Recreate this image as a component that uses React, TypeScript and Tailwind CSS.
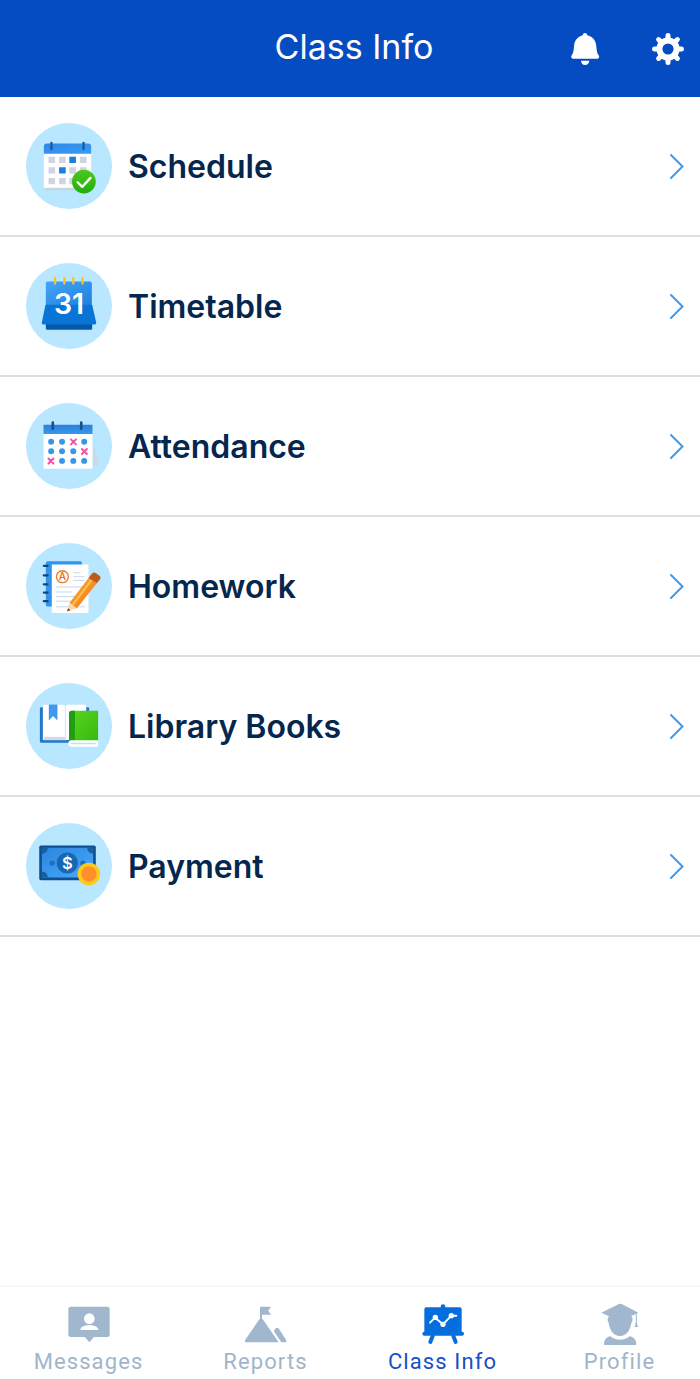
import React from "react";

const ScheduleIcon = () => (
    <svg className="w-[86px] h-[86px] shrink-0" viewBox="32 39 260 260" aria-hidden="true">
        <defs>
            <linearGradient id="scheduleTop" x1="0" y1="0" x2="1" y2="1">
                <stop offset="0" stopColor="#2f87e6" />
                <stop offset="1" stopColor="#3a9cf3" />
            </linearGradient>
            <linearGradient id="scheduleCheck" x1="0" y1="0" x2="0" y2="1">
                <stop offset="0" stopColor="#4cc91c" />
                <stop offset="1" stopColor="#22ac10" />
            </linearGradient>
        </defs>
        <circle cx="162" cy="169" r="130" fill="#b8e7ff" />
        <path d="M90 234h139v8H90z" fill="#c9d3dd" />
        <path d="M86 130h143v105H86z" fill="#fff" />
        <path d="M86 132v-21q0-10 10-10h123q10 0 10 10v21z" fill="url(#scheduleTop)" />
        <path d="M109 99v19M206 99v19" stroke="#155aa6" strokeWidth="7" strokeLinecap="round" />
        <path
            d="M100 141h20v19h-20zM132 141h20v19h-20zM195 141h20v19h-20zM100 173h20v19h-20zM163 173h20v19h-20zM195 173h20v19h-20zM100 205h20v19h-20zM132 205h20v19h-20zM163 205h20v19h-20z"
            fill="#cfd4e0"
        />
        <path d="M163 141h20v19h-20zM132 173h20v19h-20z" fill="#1b7fdd" />
        <circle cx="207" cy="216" r="36" fill="url(#scheduleCheck)" />
        <path
            d="M188 218l14 14 25-27"
            fill="none"
            stroke="#fff"
            strokeWidth="7"
            strokeLinecap="round"
            strokeLinejoin="round"
        />
    </svg>
);

const TimetableIcon = () => (
    <svg className="w-[86px] h-[86px] shrink-0" viewBox="32 39 260 260" aria-hidden="true">
        <defs>
            <linearGradient id="timetableTop" x1="0" y1="0" x2="1" y2="1">
                <stop offset="0" stopColor="#44a5f7" />
                <stop offset="1" stopColor="#1d80dc" />
            </linearGradient>
        </defs>
        <circle cx="162" cy="169" r="130" fill="#b8e7ff" />
        <path d="M92 218h140v18q0 5-5 5H97q-5 0-5-5z" fill="#0659a8" />
        <path d="M92 166V100q0-5 5-5h129q5 0 5 5v66z" fill="url(#timetableTop)" />
        <path d="M91 165h141l12 53q1 7-6 7H86q-7 0-6-7z" fill="#0875d6" />
        <path
            d="M120 84v17M148 84v17M175 84v17M203 84v17"
            stroke="#f6c52c"
            strokeWidth="7"
            strokeLinecap="round"
        />
        <text
            x="162"
            y="194"
            textAnchor="middle"
            fontFamily="Inter, sans-serif"
            fontSize="86"
            fontWeight="600"
            fill="#fff"
        >
            31
        </text>
    </svg>
);

const AttendanceIcon = () => (
    <svg className="w-[86px] h-[86px] shrink-0" viewBox="32 38 260 260" aria-hidden="true">
        <defs>
            <linearGradient id="attendanceTop" x1="0" y1="0" x2="0" y2="1">
                <stop offset="0" stopColor="#2b7fd9" />
                <stop offset="1" stopColor="#3898ec" />
            </linearGradient>
        </defs>
        <circle cx="162" cy="168" r="130" fill="#b8e7ff" />
        <path d="M234 148l17 73q1 8-7 8h-10z" fill="#c9d9e6" />
        <path d="M85 130h148v107H85z" fill="#fff" />
        <path d="M85 104h148v28H85z" fill="url(#attendanceTop)" />
        <path d="M113 97v19M199 97v19" stroke="#174f8c" strokeWidth="8" strokeLinecap="round" />
        <g fill="#3796e8">
            <circle cx="108" cy="155" r="9" />
            <circle cx="141" cy="155" r="9" />
            <circle cx="208" cy="155" r="9" />
            <circle cx="108" cy="184" r="9" />
            <circle cx="141" cy="184" r="9" />
            <circle cx="175" cy="184" r="9" />
            <circle cx="141" cy="213" r="9" />
            <circle cx="175" cy="213" r="9" />
            <circle cx="208" cy="213" r="9" />
        </g>
        <path
            d="M168 148l15 15m0-15l-15 15M201 177l15 15m0-15l-15 15M100 206l15 15m0-15l-15 15"
            stroke="#f251a0"
            strokeWidth="6"
            strokeLinecap="round"
        />
    </svg>
);

const HomeworkIcon = () => (
    <svg className="w-[86px] h-[86px] shrink-0" viewBox="32 38 260 260" aria-hidden="true">
        <defs>
            <linearGradient id="pencil" x1="0" y1="0" x2="1" y2="1">
                <stop offset="0" stopColor="#ffad38" />
                <stop offset="1" stopColor="#ef7411" />
            </linearGradient>
        </defs>
        <circle cx="162" cy="168" r="130" fill="#b8e7ff" />
        <path d="M92 99q0-6 6-6h98q5 0 5 5v132H97q-5 0-5-5z" fill="#3293ed" />
        <path
            d="M86 107h11M86 136h11M86 163h11M86 188h11M86 214h11"
            stroke="#134477"
            strokeWidth="7"
            strokeLinecap="round"
        />
        <path d="M110 103h111v147H110z" fill="#fff" />
        <path
            d="M175 128h22M175 140h34M175 151h34M123 171h87M123 186h47M123 200h60M123 214h50M123 231h87"
            stroke="#c8d6e8"
            strokeWidth="3"
        />
        <circle cx="142" cy="140" r="18" fill="#fff" stroke="#ef7a20" strokeWidth="4" />
        <text
            x="142"
            y="151"
            textAnchor="middle"
            fontFamily="Inter, sans-serif"
            fontSize="31"
            fontWeight="500"
            fill="#e76b12"
        >
            A
        </text>
        <path d="M164 219l-8 25 30-9z" fill="#f6d8ae" />
        <path d="M159 235l-3 10 11-4z" fill="#8b431d" />
        <path d="M164 219l57-75 25 16-60 75z" fill="url(#pencil)" />
        <path d="M173 225l57-75" stroke="#ffc04d" strokeWidth="6" />
        <path d="M221 144l10-13q5-6 12-2l11 8q6 5 1 12l-9 11z" fill="#bd5a1c" />
    </svg>
);

const LibraryIcon = () => (
    <svg className="w-[86px] h-[86px] shrink-0" viewBox="32 37 260 260" aria-hidden="true">
        <defs>
            <linearGradient id="greenBook" x1="0" y1="0" x2="1" y2="1">
                <stop offset="0" stopColor="#5bd622" />
                <stop offset="1" stopColor="#35b90e" />
            </linearGradient>
        </defs>
        <circle cx="162" cy="167" r="130" fill="#b8e7ff" />
        <rect x="74" y="110" width="149" height="108" rx="4" fill="#2478ca" />
        <path d="M83 107q0-4 4-4h57q5 0 7 5 2-5 7-5h52q4 0 4 4v102H83z" fill="#fff" />
        <path d="M86 200h65v10H86z" fill="#d2dbe5" />
        <path d="M151 107v103" stroke="#d5e3ee" strokeWidth="3" />
        <path d="M101 102h26v48l-13-13-13 13z" fill="#3f98ec" />
        <path d="M162 129q0-8 8-8h80v91h-88z" fill="url(#greenBook)" />
        <path d="M162 130q0-9 9-9h9v89h-10q-7 0-8 8z" fill="#249c11" />
        <path d="M170 210h80v20h-80q-10 0-10-10t10-10z" fill="#fff" />
        <path d="M170 220h71" stroke="#cfdce7" strokeWidth="4" strokeLinecap="round" />
    </svg>
);

const PaymentIcon = () => (
    <svg className="w-[86px] h-[86px] shrink-0" viewBox="32 37 260 260" aria-hidden="true">
        <defs>
            <linearGradient id="banknote" x1="0" y1="0" x2="1" y2="1">
                <stop offset="0" stopColor="#2b85dd" />
                <stop offset="1" stopColor="#48a9ff" />
            </linearGradient>
        </defs>
        <circle cx="162" cy="167" r="130" fill="#b8e7ff" />
        <rect x="72" y="105" width="171" height="105" rx="5" fill="#0e4f91" />
        <path d="M80 112h155v90H80z" fill="url(#banknote)" />
        <path
            d="M80 112h18q-1 17-18 18zM235 112h-18q1 17 18 18zM80 202h18q-1-17-18-18z"
            fill="#185f9f"
        />
        <circle cx="157" cy="158" r="32" fill="#1767b5" />
        <circle cx="111" cy="158" r="8" fill="#1d6fbd" />
        <circle cx="204" cy="158" r="8" fill="#1d6fbd" />
        <text
            x="157"
            y="175"
            textAnchor="middle"
            fontFamily="Inter, sans-serif"
            fontSize="50"
            fontWeight="600"
            fill="#fff"
        >
            $
        </text>
        <circle cx="222" cy="191" r="34" fill="#ffc917" />
        <circle cx="222" cy="191" r="23" fill="#ff8f26" />
    </svg>
);

const BellIcon = () => (
    <svg className="w-8 h-8" viewBox="926 99 96 96" fill="#fff" aria-hidden="true">
        <path d="M974 99q6 0 7 7c17 4 26 17 27 34 1 14 3 21 7 26 3 3 1 10-3 10h-75c-4 0-6-7-3-10 4-5 6-12 7-26 1-17 10-30 26-34q1-7 7-7zM962 182h25q-2 13-13 13-10 0-12-13z" />
    </svg>
);

const GearIcon = () => (
    <svg className="w-8 h-8" viewBox="0 0 32 32" aria-hidden="true">
        <path
            d="M16 2.6v26.8M2.6 16h26.8M6.6 6.6l3.5 3.5M25.4 25.4l-3.5-3.5M6.6 25.4l3.5-3.5M25.4 6.6l-3.5 3.5"
            stroke="#fff"
            strokeWidth="5"
            strokeLinecap="round"
        />
        <circle cx="16" cy="16" r="11.6" fill="#fff" />
        <circle cx="16" cy="16" r="5.6" fill="#054cc2" />
    </svg>
);

const ChevronIcon = () => (
    <svg
        className="w-[14px] h-[26px] ml-auto shrink-0"
        viewBox="0 0 14 26"
        fill="none"
        stroke="#3c9bec"
        strokeWidth="2"
        strokeLinecap="round"
        aria-hidden="true"
    >
        <polyline points="1,2 12.5,13.5 1,25" />
    </svg>
);

const MessagesIcon = () => (
    <svg className="w-11 h-[42px]" viewBox="200 70 132 126" fill="#a1b7ce" aria-hidden="true">
        <path d="M211 81h110q7 0 7 7v77q0 7-7 7h-40l-14 16-14-16h-42q-7 0-7-7V88q0-7 7-7z" />
        <circle cx="267" cy="117" r="16" fill="#fff" />
        <path d="M240 151q0-14 27-15 27 1 27 15z" fill="#fff" />
    </svg>
);

const ReportsIcon = () => (
    <svg className="w-11 h-[42px]" viewBox="732 70 132 126" fill="#a1b7ce" aria-hidden="true">
        <path d="M780 81h33l-8 12 8 12h-27v12q2 1 4 4l46 67h-96q-8 0-4-8l40-58q2-4 4-5z" />
        <path d="M823 157q-2-4 2-9 6-8 12 0l21 32q4 8-4 8h-10z" />
    </svg>
);

const ClassInfoIcon = () => (
    <svg className="w-11 h-[42px]" viewBox="213 70 132 126" fill="#066ddd" aria-hidden="true">
        <path d="M272 83v-2a7 7 0 0 1 14 0v2h43q6 0 6 6v67h1q6 0 6 6t-6 6H223q-6 0-6-6t6-6V89q0-6 6-6z" />
        <path d="M248 169l-7 18M310 169l7 18" stroke="#066ddd" strokeWidth="12" strokeLinecap="round" />
        <path
            d="M240 129l15-15 24 20 25-26h15"
            fill="none"
            stroke="#fff"
            strokeWidth="6"
            strokeLinecap="round"
            strokeLinejoin="round"
        />
        <circle cx="256" cy="113" r="8" fill="#fff" />
        <circle cx="279" cy="134" r="8" fill="#fff" />
        <circle cx="304" cy="108" r="8" fill="#fff" />
    </svg>
);

const ProfileIcon = () => (
    <svg className="w-11 h-[42px]" viewBox="744 70 132 126" fill="#a1b7ce" aria-hidden="true">
        <path d="M754 99l53-26q4-2 8 0l50 26-21 10c6 8 4 15 0 21-2 18-13 39-34 39s-32-21-34-39c-4-6-5-13 1-20z" />
        <path d="M859 101v38" stroke="#a1b7ce" strokeWidth="3" />
        <path d="M859 125l5 17h-10z" />
        <path d="M762 194c0-12 6-22 20-24 11 14 45 14 56 0 14 2 21 12 21 24q0 2-3 2h-91q-3 0-3-2z" />
    </svg>
);

const items = [
    { label: "Schedule", Icon: ScheduleIcon },
    { label: "Timetable", Icon: TimetableIcon },
    { label: "Attendance", Icon: AttendanceIcon },
    { label: "Homework", Icon: HomeworkIcon },
    { label: "Library Books", Icon: LibraryIcon },
    { label: "Payment", Icon: PaymentIcon },
];

const tabs = [
    { label: "Messages", Icon: MessagesIcon, active: false },
    { label: "Reports", Icon: ReportsIcon, active: false },
    { label: "Class Info", Icon: ClassInfoIcon, active: true },
    { label: "Profile", Icon: ProfileIcon, active: false },
];

const App = () => (
    <div className="min-h-screen flex flex-col bg-white font-['Inter',sans-serif]">
        <header className="grid grid-cols-[1fr_auto_1fr] items-center h-[97px] bg-[#054cc2] text-white">
            <h1 className="col-start-2 pl-2 pb-1 text-[34px] leading-[44px] font-normal">Class Info</h1>
            <div className="flex justify-end gap-[51px] pr-4">
                <button type="button" aria-label="Notifications">
                    <BellIcon />
                </button>
                <button type="button" aria-label="Settings">
                    <GearIcon />
                </button>
            </div>
        </header>
        <main className="flex-1">
            <ul>
                {items.map(({ label, Icon }) => (
                    <li key={label} className="border-b-2 border-[#dedfe1]">
                        <a href="#" className="flex items-center gap-4 h-[138px] pl-[26px] pr-4">
                            <Icon />
                            <span className="pt-[2px] text-[32px] leading-10 font-semibold text-[#05264d]">
                                {label}
                            </span>
                            <ChevronIcon />
                        </a>
                    </li>
                ))}
            </ul>
        </main>
        <nav className="overflow-hidden border-t-2 border-[#f7f7f8]">
            <div className="grid grid-cols-4 -mr-2 pt-4 pb-[5px]">
                {tabs.map(({ label, Icon, active }) => (
                    <a
                        key={label}
                        href="#"
                        aria-current={active ? "page" : undefined}
                        className={`flex flex-col items-center gap-[5px] font-['Roboto',sans-serif] text-[22px] leading-6 tracking-wider ${
                            active ? "text-[#1550c8]" : "text-[#a1b5ca]"
                        }`}
                    >
                        <Icon />
                        {label}
                    </a>
                ))}
            </div>
        </nav>
    </div>
);

export default App;
